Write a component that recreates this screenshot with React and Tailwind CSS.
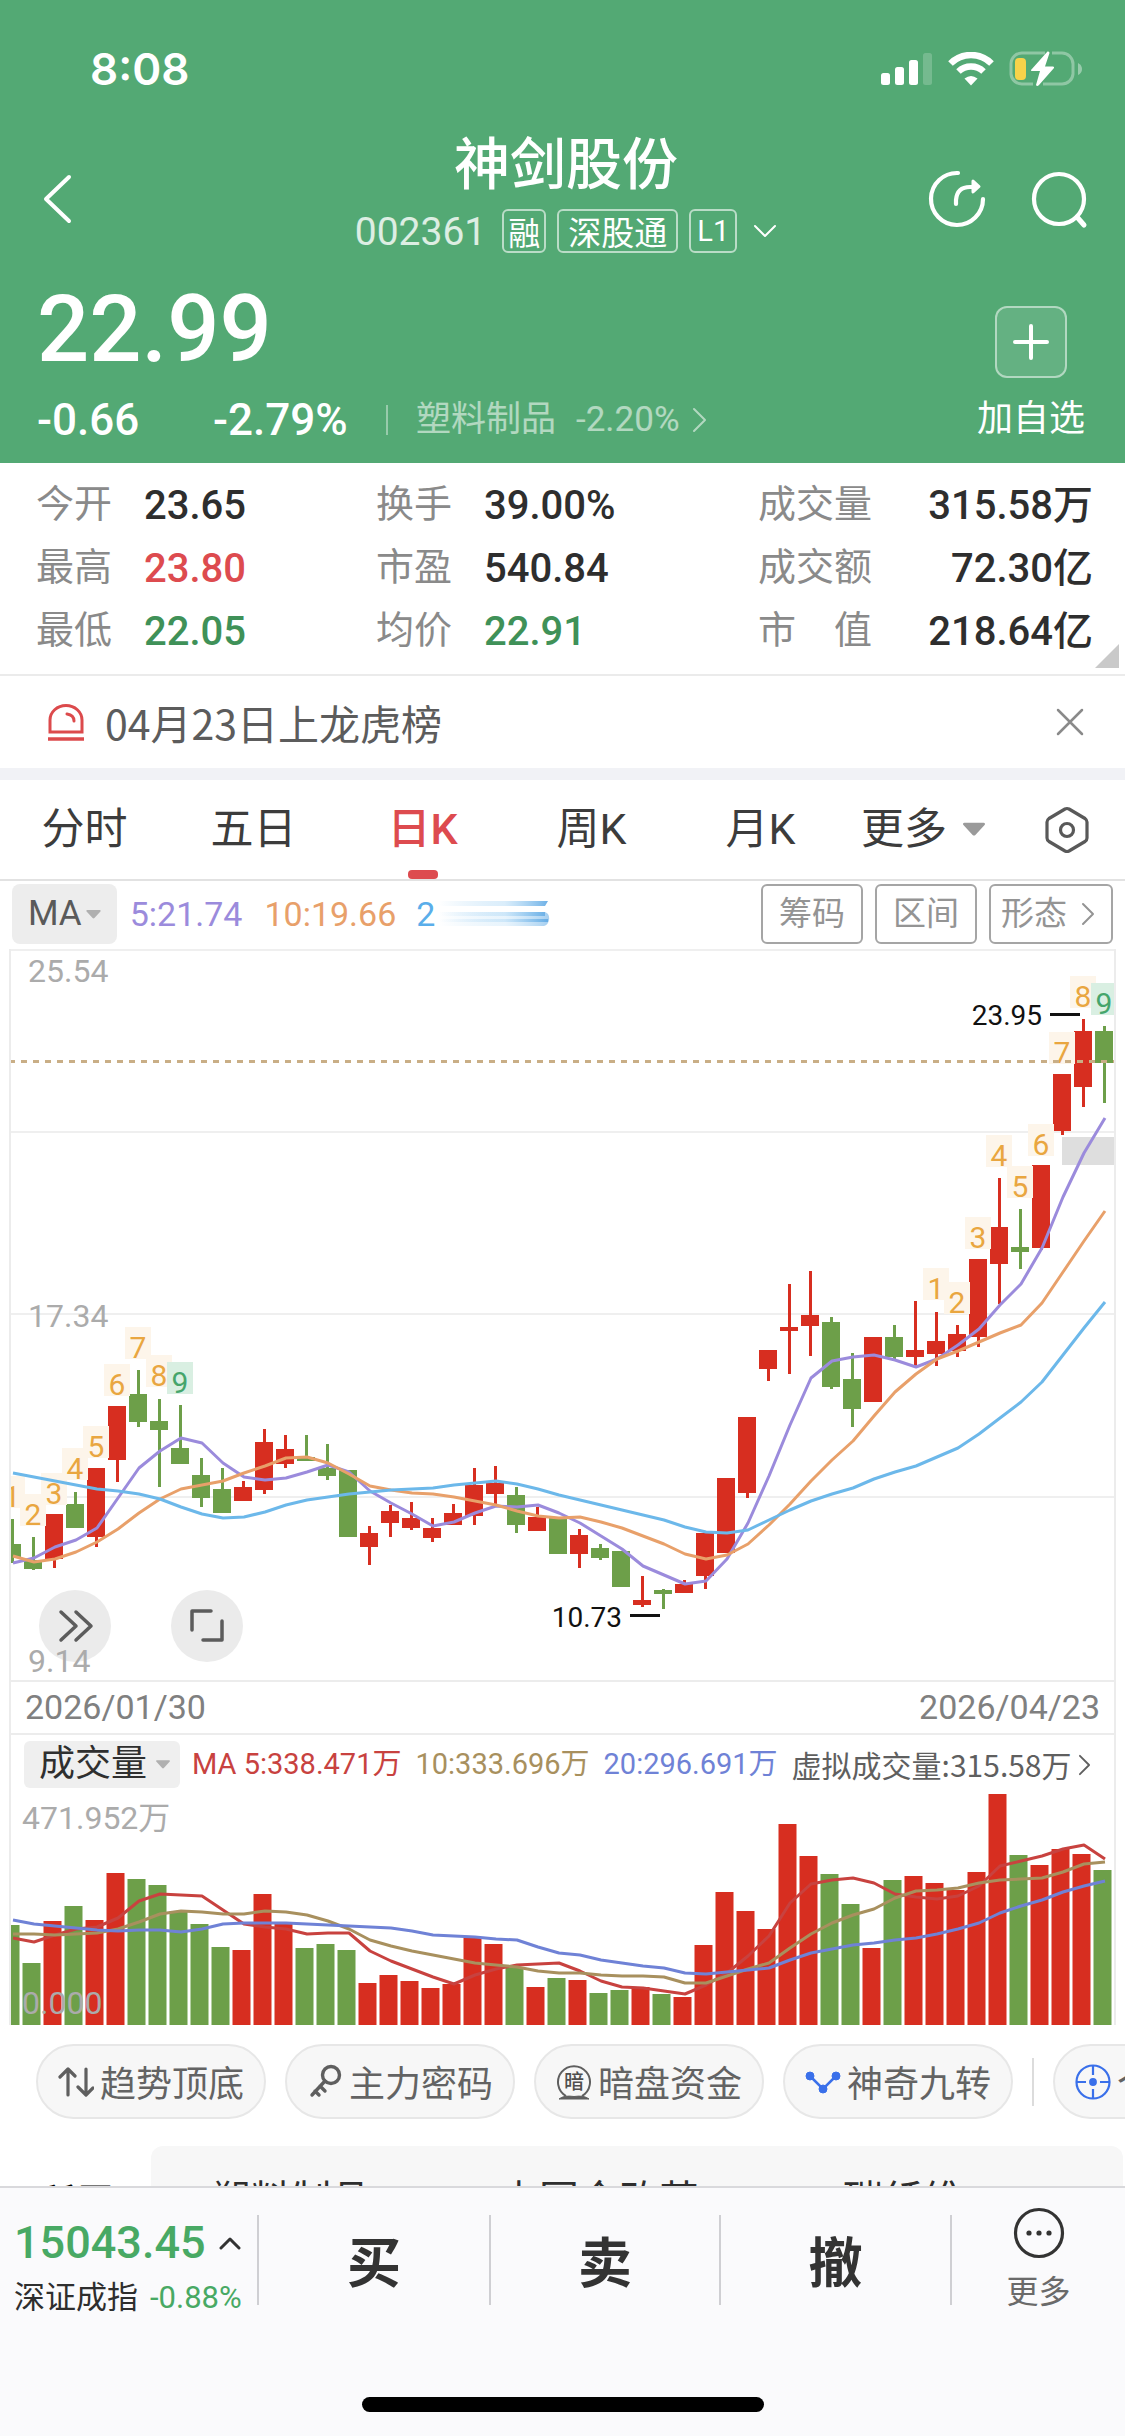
// App.jsx
import React, { useState } from "react";

const FONT = "font-['Roboto','Noto_Sans_CJK_SC',sans-serif]";
const CJK = "font-['Noto_Sans_CJK_SC',sans-serif]";

// [up, high, bodyTop, bodyBottom, low, volume] in chart units, oldest first
const CANDLES = [
  [0, 570, 595, 609, 614, 100],
  [0, 588, 611, 620, 621, 62],
  [1, 565, 565, 610, 619, 104],
  [0, 543, 555, 579, 579, 119],
  [1, 519, 519, 588, 598, 105],
  [1, 457, 457, 511, 533, 152],
  [0, 421, 445, 473, 478, 146],
  [0, 450, 472, 481, 538, 140],
  [0, 456, 499, 515, 515, 114],
  [0, 509, 526, 549, 558, 101],
  [0, 519, 540, 564, 564, 78],
  [1, 532, 538, 552, 552, 75],
  [1, 480, 493, 541, 545, 131],
  [1, 486, 500, 515, 519, 103],
  [0, 486, 508, 512, 512, 77],
  [0, 495, 519, 527, 531, 81],
  [0, 521, 521, 588, 588, 75],
  [1, 577, 584, 598, 616, 42],
  [1, 556, 562, 574, 588, 50],
  [1, 553, 569, 579, 581, 44],
  [1, 569, 579, 589, 593, 37],
  [1, 555, 564, 576, 576, 41],
  [1, 519, 536, 567, 576, 87],
  [1, 517, 534, 545, 556, 81],
  [0, 538, 546, 576, 584, 57],
  [1, 558, 568, 582, 582, 38],
  [0, 568, 568, 605, 605, 47],
  [1, 580, 586, 605, 619, 45],
  [0, 595, 599, 609, 611, 32],
  [0, 602, 602, 638, 638, 35],
  [1, 627, 651, 656, 658, 38],
  [0, 640, 641, 645, 660, 31],
  [1, 631, 635, 644, 644, 28],
  [1, 584, 584, 627, 640, 80],
  [1, 529, 529, 604, 604, 133],
  [1, 468, 468, 544, 549, 114],
  [1, 401, 401, 420, 432, 96],
  [1, 335, 378, 382, 425, 201],
  [1, 322, 366, 377, 407, 169],
  [0, 368, 373, 438, 440, 151],
  [0, 404, 430, 460, 478, 121],
  [1, 388, 388, 453, 453, 77],
  [0, 376, 388, 408, 410, 145],
  [1, 352, 401, 408, 417, 149],
  [1, 363, 392, 405, 417, 142],
  [1, 376, 385, 402, 408, 135],
  [1, 310, 310, 388, 398, 153],
  [1, 229, 278, 315, 355, 231],
  [0, 260, 298, 303, 320, 170],
  [1, 216, 216, 299, 301, 160],
  [1, 125, 125, 182, 186, 176],
  [1, 70, 82, 138, 158, 171],
  [0, 77, 82, 114, 154, 155],
];

const PRICE_LINES = [
  {
    color: "#9b8bdc",
    data: [
      614, 609, 598, 591, 579, 549, 519, 502, 489, 494, 514, 528, 531, 529, 523,
      516, 523, 542, 554, 565, 577, 573, 564, 557, 558, 556, 564, 574, 587, 600,
      617, 626, 635, 632, 610, 574, 527, 476, 429, 412, 408, 406, 411, 418, 410,
      396, 380, 356, 335, 299, 248, 204, 169,
    ],
  },
  {
    color: "#e8a06a",
    data: [
      607, 613, 610, 603, 593, 580, 564, 550, 540, 536, 532, 524, 517, 509, 508,
      514, 525, 537, 541, 544, 545, 548, 552, 556, 562, 567, 569, 568, 573, 579,
      587, 595, 605, 610, 606, 595, 576, 555, 532, 511, 492, 467, 443, 425, 410,
      402, 393, 384, 376, 354, 323, 292, 262,
    ],
  },
  {
    color: "#6cb8ea",
    data: [
      524, 528, 532, 536, 540, 542, 545, 550, 558, 565, 569, 568, 563, 556, 551,
      548, 545, 543, 541, 540, 539, 536, 534, 532, 535, 540, 546, 551, 556, 561,
      566, 571, 578, 583, 584, 581, 571, 561, 552, 545, 539, 530, 523, 517, 508,
      499, 485, 469, 453, 433, 406, 379, 353,
    ],
  },
];

const VOLUME_LINES = [
  {
    color: "#c8423f",
    data: [
      87, 83, 90, 96, 98, 107, 124, 131, 130, 129, 115, 101, 98, 96, 91, 92, 92,
      74, 64, 56, 48, 41, 50, 56, 60, 61, 62, 54, 44, 38, 37, 34, 31, 40, 52,
      69, 89, 122, 141, 145, 147, 142, 131, 128, 126, 129, 139, 159, 164, 169,
      176, 180, 166,
    ],
  },
  {
    color: "#a8905e",
    data: [
      91, 91, 90, 91, 92, 96, 103, 111, 114, 113, 111, 111, 114, 113, 110, 104,
      96, 85, 79, 74, 70, 66, 62, 60, 58, 54, 52, 52, 50, 49, 49, 48, 42, 42,
      49, 56, 62, 77, 91, 102, 110, 116, 127, 134, 135, 137, 142, 145, 146, 147,
      153, 161, 163,
    ],
  },
  {
    color: "#6f82d6",
    data: [
      105, 101, 99, 97, 95, 94, 95, 95, 93, 96, 101, 102, 102, 102, 101, 100,
      99, 98, 97, 94, 90, 89, 88, 86, 85, 78, 72, 70, 65, 62, 59, 57, 52, 51,
      53, 55, 57, 65, 72, 76, 80, 82, 85, 87, 91, 96, 102, 112, 119, 125, 133,
      139, 144,
    ],
  },
];

// [candle index, count, top of the badge]
const COUNTS = [
  [0, 1, 527],
  [1, 2, 545],
  [2, 3, 524],
  [3, 4, 499],
  [4, 5, 477],
  [5, 6, 415],
  [6, 7, 378],
  [7, 8, 406],
  [8, 9, 413],
  [44, 1, 319],
  [45, 2, 333],
  [46, 3, 268],
  [47, 4, 186],
  [48, 5, 217],
  [49, 6, 175],
  [50, 7, 83],
  [51, 8, 27],
  [52, 9, 34],
];

const STATS = [
  { label: "今开", value: "23.65" },
  { label: "换手", value: "39.00%" },
  { label: "成交量", value: "315.58万" },
  { label: "最高", value: "23.80", color: "text-[#dd4b4f]" },
  { label: "市盈", value: "540.84" },
  { label: "成交额", value: "72.30亿" },
  { label: "最低", value: "22.05", color: "text-[#3f9158]" },
  { label: "均价", value: "22.91", color: "text-[#3f9158]" },
  { label: "市\u3000值", value: "218.64亿" },
];

const TABS = ["分时", "五日", "日K", "周K", "月K"];

const candleX = (i) => 12 + i * 21;
const toPoints = (data, base) =>
  data.map((v, i) => `${candleX(i) + 1},${base ? base - v : v}`).join(" ");

function Chevron({ className, d = "M2 2 L12 12 L2 22", box = "0 0 14 24", width = 2 }) {
  return (
    <svg
      className={className}
      viewBox={box}
      fill="none"
      stroke="currentColor"
      strokeWidth={width}
      strokeLinecap="round"
      strokeLinejoin="round"
    >
      <path d={d} />
    </svg>
  );
}

function Triangle({ className }) {
  return (
    <svg className={className} viewBox="0 0 16 10" fill="currentColor">
      <path d="M1 0h14a1 1 0 0 1 .7 1.700L9 9a1.500 1.500 0 0 1-2 0L.3 1.700A1 1 0 0 1 1 0z" />
    </svg>
  );
}

function StatusBar() {
  return (
    <div className="flex items-center justify-between pt-[46px] pr-[42px] pl-[90px]">
      <span className="font-['Inter',sans-serif] text-[44px] leading-[46px] font-semibold">
        8:08
      </span>
      <div className="flex items-center">
        <svg className="mr-[15px] h-[34px] w-[52px]" viewBox="0 0 52 34" fill="#fff">
          <rect x="0" y="21" width="9" height="12" rx="2.500" />
          <rect x="14" y="15" width="9" height="18" rx="2.500" />
          <rect x="28" y="8" width="9" height="25" rx="2.500" />
          <rect x="42" y="1" width="9" height="32" rx="2.500" opacity="0.200" />
        </svg>
        <svg className="mr-[15px] h-[34px] w-[46px]" viewBox="0 0 46 34" fill="none" stroke="#fff">
          <path d="M2.500 11.500 A29 29 0 0 1 43.500 11.500" strokeWidth="6.500" />
          <path d="M10.500 19.500 A18 18 0 0 1 35.500 19.500" strokeWidth="6.500" />
          <path d="M16.500 26.500 Q23 21.500 29.500 26.500 L23 33.500z" fill="#fff" stroke="none" />
        </svg>
        <svg className="h-[36px] w-[74px]" viewBox="0 0 74 36" fill="none">
          <path
            d="M36 2 H14 A11 11 0 0 0 2 13 V23 A11 11 0 0 0 14 33 H24 M34 33 H53 A11 11 0 0 0 64 23 V13 A11 11 0 0 0 53 2 H43"
            stroke="#fff"
            strokeOpacity="0.350"
            strokeWidth="3"
          />
          <path d="M69 12 Q73 14 73 18 T69 24z" fill="#fff" fillOpacity="0.400" />
          <rect x="6" y="7" width="11" height="22" rx="4" fill="#f7d34a" />
          <path d="M38.500 0.500 L22 19 Q21.500 20 23 20 H31 L27 34 Q28 36 30 34 L45 17 Q45.500 15.500 44 15.500 H36 L40.500 2 Q40.500 0 38.500 0.500z" fill="#fff" />
        </svg>
      </div>
    </div>
  );
}

function Header() {
  return (
    <header className="bg-[#53a974] text-white">
      <StatusBar />
      <div className="grid grid-cols-[1fr_auto_1fr] items-center pt-9 pr-[35px] pl-[42px]">
        <button type="button" aria-label="返回" className="justify-self-start pt-4">
          <Chevron
            className="h-[52px] w-[30px]"
            box="0 0 30 52"
            d="M27 4 L4 26 L27 48"
            width={4}
          />
        </button>
        <div className="flex flex-col items-center">
          <h1 className={`text-[56px] leading-[64px] font-medium ${CJK}`}>神剑股份</h1>
          <div className="mt-[17px] flex items-center">
            <span className="mr-4 pt-[3px] text-[39px] leading-[41px] text-white/80">
              002361
            </span>
            <span className={`mr-[11px] rounded-md border-2 border-white/60 px-1 text-[32px] leading-[40px] ${CJK}`}>
              融
            </span>
            <span className={`mr-[11px] rounded-md border-2 border-white/60 px-[9px] text-[33px] leading-[40px] ${CJK}`}>
              深股通
            </span>
            <span className="mr-4 rounded-md border-2 border-white/60 px-[6px] text-[29px] leading-[40px]">
              L1
            </span>
            <Chevron className="h-4 w-6" box="0 0 24 16" d="M2 3 L12 13 L22 3" />
          </div>
        </div>
        <div className="flex items-center gap-[43px] justify-self-end pt-4">
          <button type="button" aria-label="分享">
            <svg
              className="h-[60px] w-[60px]"
              viewBox="0 0 60 60"
              fill="none"
              stroke="#fff"
              strokeWidth="4.200"
              strokeLinecap="round"
            >
              <path d="M31 4 A26 26 0 1 0 56 30" />
              <path d="M29 35 V31 Q30 18 43 18 H49" />
              <path d="M46 12 L52 17.500 L46 23z" fill="#fff" strokeWidth="3" strokeLinejoin="round" />
            </svg>
          </button>
          <button type="button" aria-label="搜索">
            <svg
              className="h-[60px] w-[60px]"
              viewBox="0 0 60 60"
              fill="none"
              stroke="#fff"
              strokeWidth="4.200"
              strokeLinecap="round"
            >
              <circle cx="29" cy="30" r="25" />
              <path d="M47 48 L54 56" strokeWidth="5" />
            </svg>
          </button>
        </div>
      </div>
      <div className="flex items-start justify-between pt-[30px] pr-10 pb-[18px] pl-[37px]">
        <div>
          <div className="text-[92px] leading-[94px] font-medium">22.99</div>
          <div className="mt-[18px] flex items-center text-[44px] leading-[50px]">
            <span className="w-[176px] font-medium">-0.66</span>
            <span className="w-[173px] font-medium">-2.79%</span>
            <span className="mr-[28px] h-[30px] w-[2px] bg-white/40"></span>
            <a href="#sector" className="flex items-center text-[35px] text-white/55">
              <span className="mr-5">塑料制品</span>
              <span className="mr-3">-2.20%</span>
              <Chevron className="h-[28px] w-4" box="0 0 16 28" d="M2 3 L13 14 L2 25" />
            </a>
          </div>
        </div>
        <button type="button" className="flex flex-col items-center pt-[23px]">
          <span className="flex h-[72px] w-[72px] items-center justify-center rounded-xl border-2 border-white/50 bg-white/10">
            <svg className="h-9 w-9" viewBox="0 0 36 36" stroke="#fff" strokeWidth="4" strokeLinecap="round">
              <path d="M18 2 V34 M2 18 H34" />
            </svg>
          </span>
          <span className={`mt-[14px] text-[36px] leading-[46px] ${CJK}`}>加自选</span>
        </button>
      </div>
    </header>
  );
}

function Stats() {
  return (
    <section className="relative border-b-2 border-[#ebebeb] bg-white pt-[10px] pb-3">
      <dl className="grid grid-cols-[340fr_382fr_335fr] pr-8 pl-[36px]">
        {STATS.map((s, i) => (
          <div
            key={s.label}
            className={i % 3 === 2 ? "flex items-center justify-between" : "flex items-center gap-[32px]"}
          >
            <dt className="text-[38px] leading-[63px] whitespace-pre text-[#8a8a8a]">
              {s.label}
            </dt>
            <dd className={`pt-[2px] text-[40px] leading-[61px] font-medium ${s.color || "text-[#2e2e2e]"}`}>
              {s.value}
            </dd>
          </div>
        ))}
      </dl>
      <svg className="absolute right-[6px] bottom-[6px] h-6 w-6" viewBox="0 0 24 24" fill="#c9c9c9">
        <path d="M24 0 V24 H0z" />
      </svg>
    </section>
  );
}

function Notice({ onClose }) {
  return (
    <div className="flex items-center border-b-[12px] border-[#f1f2f6] bg-white py-[16px] pr-10 pl-[47px]">
      <svg
        className="mr-5 h-[38px] w-[38px]"
        viewBox="0 0 38 38"
        fill="none"
        stroke="#dc4a4c"
        strokeWidth="3"
      >
        <path d="M3 29 V17 A16 14.500 0 0 1 35 17 V29z" />
        <path d="M1 36 H37" strokeWidth="3.500" />
        <path d="M20 11 Q27 12 27 18" strokeLinecap="round" />
      </svg>
      <p className={`flex-1 text-[41px] leading-[60px] text-[#5c5c5c] ${CJK}`}>
        04月23日上龙虎榜
      </p>
      <button type="button" aria-label="关闭" onClick={onClose}>
        <svg className="h-[30px] w-[30px]" viewBox="0 0 30 30" stroke="#8a8a8a" strokeWidth="2.500" strokeLinecap="round">
          <path d="M3 3 L27 27 M27 3 L3 27" />
        </svg>
      </button>
    </div>
  );
}

function PeriodTabs() {
  const [active, setActive] = useState("日K");

  return (
    <nav className="grid grid-cols-[repeat(5,169fr)_156fr_124fr] border-b-2 border-[#e2e2e2] bg-white text-[43px] leading-[99px] text-[#3c3c3c]">
      {TABS.map((tab) => (
        <button
          key={tab}
          type="button"
          onClick={() => setActive(tab)}
          className={`relative ${active === tab ? "font-medium text-[#dd4b4f]" : ""}`}
        >
          {tab}
          {active === tab && (
            <span className="absolute bottom-0 left-1/2 h-[9px] w-[30px] -translate-x-1/2 rounded-[4px] bg-[#dd4b4f]"></span>
          )}
        </button>
      ))}
      <button type="button" className="flex items-center justify-center gap-4">
        更多
        <Triangle className="h-[15px] w-[22px] text-[#9a9a9a]" />
      </button>
      <button type="button" aria-label="设置" className="flex items-center justify-center pl-2">
        <svg className="h-[48px] w-[44px]" viewBox="0 0 44 48" fill="none" stroke="#595959" strokeWidth="3.200" strokeLinejoin="round">
          <path d="M20 3 Q22 2 24 3 L40 12.500 Q42 14 42 16 V32 Q42 34 40 35.500 L24 45 Q22 46 20 45 L4 35.500 Q2 34 2 32 V16 Q2 14 4 12.500z" />
          <circle cx="22" cy="24" r="6.500" />
        </svg>
      </button>
    </nav>
  );
}

function MaBar() {
  return (
    <div className="flex items-center px-3 pt-[3px] pb-[5px] text-[34px] leading-[60px]">
      <button
        type="button"
        className="mr-[13px] flex items-center gap-[4px] rounded-lg bg-[#ededed] pr-4 pl-4 text-[35px] text-[#5a5a5a]"
      >
        MA
        <Triangle className="h-[9px] w-[15px] text-[#b0b0b0]" />
      </button>
      <span className="mr-[22px] text-[#9b8bdc]">5:21.74</span>
      <span className="mr-[20px] text-[#e8a06a]">10:19.66</span>
      <span className="text-[#5aaeea]">2</span>
      <svg className="h-[28px] w-[115px]" viewBox="0 0 115 28">
        <defs>
          <linearGradient id="fade">
            <stop offset="0" stopColor="#5aaeea" stopOpacity="0" />
            <stop offset="0.600" stopColor="#8cc8f2" stopOpacity="0.400" />
            <stop offset="1" stopColor="#4a9de0" />
          </linearGradient>
        </defs>
        <path d="M4 1 H113 L110 6 H4z" fill="url(#fade)" opacity="0.800" />
        <path d="M4 12 H110 Q115 14 114 20 Q113 25 109 26 H4z" fill="url(#fade)" opacity="0.500" />
        <path d="M4 12 H110 V16 H4z M4 19 H113 V22 H4z" fill="url(#fade)" opacity="0.700" />
      </svg>
      <div className="ml-auto flex gap-3 text-[33px] leading-[56px] text-[#949494]">
        <button type="button" className="rounded-md border-2 border-[#a5a5a5] px-4">
          筹码
        </button>
        <button type="button" className="rounded-md border-2 border-[#a5a5a5] px-4">
          区间
        </button>
        <button type="button" className="flex items-center gap-[14px] rounded-md border-2 border-[#a5a5a5] pr-4 pl-[10px]">
          形态
          <Chevron className="h-[24px] w-[14px]" />
        </button>
      </div>
    </div>
  );
}

function PriceChart() {
  return (
    <div className="relative">
      <svg className="block w-full" viewBox="11 0 1103 731">
        <g stroke="#efefef" strokeWidth="2">
          <path d="M11 1 H1115 M11 183 H1115 M11 365 H1115 M11 548 H1115" />
        </g>
        <rect x="1062" y="188" width="54" height="28" fill="#dedede" />
        {CANDLES.map(([up, high, top, bottom, low], i) => (
          <g key={i} fill={up ? "#d72e20" : "#6d9f49"}>
            <rect x={candleX(i) - 1} y={high} width="3" height={low - high} />
            <rect x={candleX(i) - 9} y={top} width="18" height={bottom - top} />
          </g>
        ))}
        {COUNTS.map(([i, n, y]) => (
          <g key={i}>
            <rect
              x={candleX(i) - 13}
              y={y}
              width="26"
              height="32"
              fill={n === 9 ? "#d9efe2" : "#fdf5ea"}
            />
            <text
              x={candleX(i)}
              y={y + 31}
              textAnchor="middle"
              fontSize="30"
              fill={n === 9 ? "#45a56b" : "#e9a640"}
            >
              {n}
            </text>
          </g>
        ))}
        {PRICE_LINES.map((line) => (
          <polyline
            key={line.color}
            points={toPoints(line.data)}
            fill="none"
            stroke={line.color}
            strokeWidth="3"
            strokeLinejoin="round"
          />
        ))}
        <path d="M9 112.500 H1115" stroke="#c9ae86" strokeWidth="3" strokeDasharray="6 6" />
        <g fill="#111" fontSize="28">
          <text x="1042" y="76" textAnchor="end">23.95</text>
          <text x="622" y="678" textAnchor="end">10.73</text>
          <path d="M1050 64 H1080 V67 H1050z M630 665 H660 V668 H630z" />
        </g>
        <g fill="#ebebeb">
          <circle cx="75" cy="677" r="36" />
          <circle cx="207" cy="677" r="36" />
        </g>
        <g fill="none" stroke="#5c5c5c" strokeWidth="3.500" strokeLinecap="round" strokeLinejoin="round">
          <path d="M61 663 L76 677 L61 691 M76 663 L91 677 L76 691" />
          <path d="M211 662 H192 V681 M222 672 V691 H203" />
        </g>
        <g fill="#ababab" fontSize="32">
          <text x="28" y="33">25.54</text>
          <text x="28" y="378">17.34</text>
          <text x="28" y="723">9.14</text>
        </g>
      </svg>
      <button
        type="button"
        aria-label="展开"
        className="absolute bottom-[18px] left-[28px] h-[72px] w-[72px] rounded-full"
      ></button>
      <button
        type="button"
        aria-label="全屏"
        className="absolute bottom-[18px] left-[160px] h-[72px] w-[72px] rounded-full"
      ></button>
    </div>
  );
}

function VolumeChart() {
  return (
    <div>
      <div className="flex items-center pt-[6px] pb-[5px] pl-[13px] text-[29px] leading-[47px] whitespace-nowrap">
        <button
          type="button"
          className="mr-[12px] flex items-center gap-[9px] rounded-md bg-[#efefef] pr-[10px] pl-[15px] text-[36px] text-[#2f2f2f]"
        >
          成交量
          <Triangle className="h-[9px] w-[14px] text-[#b0b0b0]" />
        </button>
        <span className="mr-[14px] text-[#c8423f]">MA 5:338.471万</span>
        <span className="mr-[14px] text-[#a8905e]">10:333.696万</span>
        <span className="mr-[14px] text-[#6f82d6]">20:296.691万</span>
        <a href="#volume" className={`flex items-center gap-[6px] text-[30px] text-[#5f5f5f] ${CJK}`}>
          虚拟成交量:315.58万
          <Chevron className="h-[22px] w-[13px]" />
        </a>
      </div>
      <svg className="block w-full" viewBox="11 0 1103 232">
        {CANDLES.map(([up, , , , , volume], i) => (
          <rect
            key={i}
            x={candleX(i) - 10.500}
            y={232 - volume}
            width="18"
            height={volume}
            fill={up ? "#d72e20" : "#6d9f49"}
          />
        ))}
        {VOLUME_LINES.map((line) => (
          <polyline
            key={line.color}
            points={toPoints(line.data, 232)}
            fill="none"
            stroke={line.color}
            strokeWidth="3"
            strokeLinejoin="round"
          />
        ))}
        <g fill="#ababab" fontSize="32">
          <text x="22" y="36">471.952万</text>
          <text x="22" y="221">0.000</text>
        </g>
      </svg>
    </div>
  );
}

const ICON = "mr-[6px] h-9 w-9 shrink-0";

const TOOLS = [
  {
    label: "趋势顶底",
    icon: (
      <svg className={ICON} viewBox="0 0 36 36" fill="none" stroke="#5f5f5f" strokeWidth="3.200" strokeLinecap="round" strokeLinejoin="round">
        <path d="M10 31 V6 M2 13 L10 5 L17 12" />
        <path d="M28 5 V30 M20 23 L28 31 L35 24" />
      </svg>
    ),
  },
  {
    label: "主力密码",
    icon: (
      <svg className={ICON} viewBox="0 0 36 36" fill="none" stroke="#5f5f5f" strokeWidth="3.400" strokeLinecap="round">
        <circle cx="24" cy="11" r="8.500" />
        <path d="M18 17 L5 31 M8 27 L12 31 M13 22 L18 27" />
      </svg>
    ),
  },
  {
    label: "暗盘资金",
    icon: (
      <svg className={ICON} viewBox="0 0 36 36" fill="none" stroke="#5f5f5f" strokeWidth="2">
        <path d="M10 32 A16 16 0 1 1 26 32" />
        <path d="M3 35 Q8 31 18 32.500 Q28 31 33 35z" fill="#5f5f5f" strokeWidth="1" />
        <text x="18" y="25" textAnchor="middle" fontSize="20" fontWeight="500" fill="#4f4f4f" stroke="none">
          暗
        </text>
      </svg>
    ),
  },
  {
    label: "神奇九转",
    icon: (
      <svg className={ICON} viewBox="0 0 36 36" fill="#3a70ea" stroke="#3a70ea">
        <path d="M5 12 L18 25 L31 12" fill="none" strokeWidth="2.500" />
        <circle cx="5" cy="12" r="4" />
        <circle cx="18" cy="25" r="4" />
        <circle cx="31" cy="12" r="4" />
      </svg>
    ),
  },
];

const PILL = `flex shrink-0 items-center rounded-full border-2 border-[#e7e7e7] bg-[#f7f7f7] px-5 text-[36px] leading-[71px] whitespace-nowrap text-[#636363] ${CJK}`;

function ToolPills() {
  return (
    <div className="flex items-center gap-[19px] overflow-hidden pt-[19px] pl-9">
      {TOOLS.map((tool) => (
        <button key={tool.label} type="button" className={PILL}>
          {tool.icon}
          {tool.label}
        </button>
      ))}
      <span className="h-12 w-[2px] shrink-0 bg-[#dcdcdc]"></span>
      <button type="button" className={PILL}>
        <svg className={ICON} viewBox="0 0 36 36" fill="none" stroke="#3a70ea" strokeWidth="2.200">
          <circle cx="18" cy="18" r="16.500" />
          <path d="M18 2 V11 M18 25 V34 M2 18 H11 M25 18 H34" />
          <circle cx="18" cy="18" r="2.800" fill="#3a70ea" />
        </svg>
        个股诊断
      </button>
    </div>
  );
}

function Sectors() {
  return (
    <div className="flex items-start pt-[27px] pr-[2px] pl-[38px]">
      <span className="w-[113px] pt-[33px] text-[38px] leading-[48px] font-bold text-black">
        所属
      </span>
      <div className={`flex flex-1 rounded-xl bg-[#f7f7f7] pt-[23px] pb-6 pl-[60px] text-[40px] leading-[56px] text-[#2e2e2e] ${CJK}`}>
        <a href="#s1" className="w-[288px]">塑料制品</a>
        <a href="#s2" className="w-[344px]">央国企改革</a>
        <a href="#s3">碳纤维</a>
      </div>
    </div>
  );
}

function BottomBar() {
  return (
    <footer className="fixed inset-x-0 bottom-0 border-t-2 border-[#d9d9dc] bg-[#fafafc] pt-[27px] pb-6">
      <div className="grid grid-cols-[257fr_232fr_230fr_233fr_173fr]">
        <div className="pl-[14px]">
          <div className="flex items-center gap-[13px] text-[45px] leading-[56px] font-medium text-[#48a964]">
            15043.45
            <Chevron className="h-[14px] w-[22px] text-[#333]" box="0 0 22 14" d="M2 12 L11 3 L20 12" width={3} />
          </div>
          <div className="mt-[2px] flex items-center gap-3 text-[31px] leading-[50px] whitespace-nowrap text-[#2e2e2e]">
            深证成指
            <span className="text-[#48a964]">-0.88%</span>
          </div>
        </div>
        {["买", "卖", "撤"].map((label) => (
          <button
            key={label}
            type="button"
            className={`mb-[18px] border-l-2 border-[#cfcfd3] text-[54px] leading-[90px] font-bold text-[#333] last-of-type:border-l-0 nth-4:border-r-2 ${CJK}`}
          >
            {label}
          </button>
        ))}
        <button type="button" className="-mt-3 flex flex-col items-center text-[32px] leading-[44px] text-[#6a6a6a]">
          <svg className="mt-[4px] mb-[11px] h-[52px] w-[52px]" viewBox="0 0 52 52" fill="none" stroke="#333" strokeWidth="3.200">
            <circle cx="26" cy="26" r="23.500" />
            <g fill="#333" stroke="none">
              <circle cx="16" cy="26" r="2.600" />
              <circle cx="26" cy="26" r="2.600" />
              <circle cx="36" cy="26" r="2.600" />
            </g>
          </svg>
          更多
        </button>
      </div>
      <div className="mx-auto mt-[74px] h-[15px] w-[402px] rounded-full bg-black"></div>
    </footer>
  );
}

function App() {
  const [showNotice, setShowNotice] = useState(true);

  return (
    <div className={`min-h-screen overflow-hidden bg-white ${FONT}`}>
      <Header />
      <Stats />
      {showNotice && <Notice onClose={() => setShowNotice(false)} />}
      <PeriodTabs />
      <MaBar />
      <div className="mx-[9px] border-x-2 border-[#ececec]">
        <PriceChart />
        <div className="flex justify-between border-y-2 border-[#ececec] px-[14px] text-[34px] leading-[51px] text-[#808080]">
          <span>2026/01/30</span>
          <span>2026/04/23</span>
        </div>
        <VolumeChart />
      </div>
      <ToolPills />
      <Sectors />
      <BottomBar />
    </div>
  );
}

export default App;
